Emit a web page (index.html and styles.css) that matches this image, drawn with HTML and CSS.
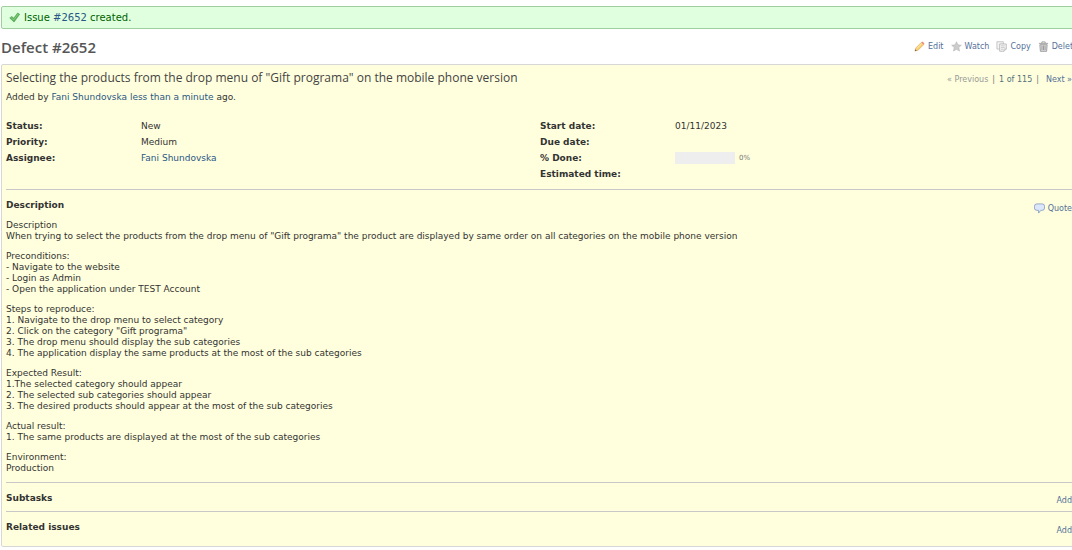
FILE: index.html
```html
<!DOCTYPE html>
<html lang="en">
<head>
<meta charset="utf-8">
<title>Defect #2652</title>
<link rel="stylesheet" href="styles.css">
</head>
<body>
<main class="content">
  <div class="flash">
    <svg class="icon" viewBox="0 0 12 12"><path d="M.8 6.500 3.200 4.800l1.800 2L9.500 1 11.600 2.500 5.500 11Z" fill="#5cb356" stroke="#3f9a46" stroke-width=".6"/><path d="M2.500 6.300 5 8.600 10 2.300" fill="none" stroke="#9bd891" stroke-width=".8"/></svg>
    <p>Issue <a href="#">#2652</a> created.</p>
  </div>
  <header class="heading">
    <h1>Defect #2652</h1>
    <nav class="actions">
      <a href="#"><svg class="icon" viewBox="0 0 12 12"><path d="M1 11 2 7.500 8 1.500 10.500 4 4.500 10Z" fill="#f8cf76" stroke="#d9a54c" stroke-width=".6"/><path d="M8 1.500 9.200.6 11.400 2.800 10.500 4Z" fill="#e98b78"/><path d="M1 11 1.500 9 3 10.500Z" fill="#665e58"/><path d="M3 8.200 8.700 2.600" stroke="#fff0bd" stroke-width=".8"/></svg>Edit</a>
      <a href="#"><svg class="icon" viewBox="0 0 12 12"><path d="m6 .8 1.500 3.400 3.800.4-2.800 2.500.8 3.900L6 9.100 2.700 11l.8-3.900L.7 4.600l3.800-.4Z" fill="#ccc" stroke="#b3b3b3" stroke-width=".6"/></svg>Watch</a>
      <a href="#"><svg class="icon" viewBox="0 0 12 12"><path d="M1 .8h7v8H1Z" fill="#f4f4f4" stroke="#b7b7b7" stroke-width=".8"/><path d="M4 3.200h7.200v5.500l-2.400 2.500H4Z" fill="#f5f5f5" stroke="#acacac" stroke-width=".8"/><path d="M5.500 5.300h4M5.500 7.200h4M5.500 9.100h2M8.800 11V8.700h2.300" fill="none" stroke="#bbb" stroke-width=".8"/></svg>Copy</a>
      <a href="#"><svg class="icon" viewBox="0 0 12 12"><path d="M2 4h8l-.6 7.300H2.600Z" fill="#ddd" stroke="#858585" stroke-width=".8"/><path d="M1 2.600h10M4.200 2.300V1h3.600v1.300M4.300 5v5M6 5v5M7.700 5v5" fill="none" stroke="#858585" stroke-width=".8"/></svg>Delete</a>
    </nav>
  </header>
  <article class="issue">
    <div class="title-row">
      <h2>Selecting the products from the drop menu of "Gift programa" on the mobile phone version</h2>
      <nav class="pager"><span class="muted">« Previous</span><span>|</span><span class="count">1 of 115</span><span>|</span><a href="#">Next »</a></nav>
    </div>
    <p class="author">Added by <a href="#">Fani Shundovska</a> <a href="#">less than a minute</a> ago.</p>
    <div class="attributes">
      <dl>
        <dt>Status:</dt><dd>New</dd>
        <dt>Priority:</dt><dd>Medium</dd>
        <dt>Assignee:</dt><dd><a href="#">Fani Shundovska</a></dd>
      </dl>
      <dl>
        <dt>Start date:</dt><dd>01/11/2023</dd>
        <dt>Due date:</dt><dd></dd>
        <dt>% Done:</dt><dd class="done"><span class="bar"></span><span class="percent">0%</span></dd>
        <dt>Estimated time:</dt><dd></dd>
      </dl>
    </div>
    <section class="description">
      <div class="section-head">
        <h3>Description</h3>
        <a class="tool" href="#"><svg class="icon" viewBox="0 0 12 12"><path d="M3 1h6q2.500 0 2.500 2.500v2Q11.500 8 9 8H7.500L5 11V8H3Q.5 8 .5 5.500v-2Q.5 1 3 1Z" fill="#dce8fa" stroke="#8398c4" stroke-width=".9"/></svg>Quote</a>
      </div>
      <div class="text">
        <p>Description<br>When trying to select the products from the drop menu of "Gift programa" the product are displayed by same order on all categories on the mobile phone version</p>
        <p>Preconditions:<br>- Navigate to the website<br>- Login as Admin<br>- Open the application under TEST Account</p>
        <p>Steps to reproduce:<br>1. Navigate to the drop menu to select category<br>2. Click on the category "Gift programa"<br>3. The drop menu should display the sub categories<br>4. The application display the same products at the most of the sub categories</p>
        <p>Expected Result:<br>1.The selected category should appear<br>2. The selected sub categories should appear<br>3. The desired products should appear at the most of the sub categories</p>
        <p>Actual result:<br>1. The same products are displayed at the most of the sub categories</p>
        <p>Environment:<br>Production</p>
      </div>
    </section>
    <section class="subtasks">
      <div class="section-head"><h3>Subtasks</h3><a class="tool" href="#">Add</a></div>
    </section>
    <section class="related">
      <div class="section-head"><h3>Related issues</h3><a class="tool" href="#">Add</a></div>
    </section>
  </article>
</main>
</body>
</html>
```
FILE: styles.css
```css
body {
  margin: 0;
  overflow: hidden;
  background: #fff;
  color: #333;
  font-family: "DejaVu Sans", Verdana, sans-serif;
  font-size: 9px;
}

h1, h2, h3, p, dl, dd { margin: 0; }

a {
  color: #2a5685;
  text-decoration: none;
}

.content {
  margin-right: -8px;
  padding: 6px 0 0 1px;
}

.icon {
  flex: none;
  width: 11px;
  height: 11px;
}

.flash {
  display: flex;
  align-items: center;
  gap: 4px;
  padding: 3px 7px;
  border: 1px solid #9fcf9f;
  border-radius: 2px;
  background: #dfffdf;
  color: #005f00;
  font-size: 10px;
  line-height: 15px;
}

.heading {
  display: flex;
  align-items: center;
  justify-content: space-between;
  height: 35px;
}

h1, h2 {
  color: #555;
  font-family: "Open Sans", "Trebuchet MS", sans-serif;
}

h1 {
  font-size: 15px;
  font-weight: 600;
  line-height: 20px;
}

.actions {
  display: flex;
  gap: 7px;
  padding-right: 2px;
  font-size: 8px;
}

.actions a, .tool {
  display: flex;
  align-items: center;
  gap: 3px;
  color: #55709a;
  white-space: nowrap;
}

.issue {
  padding: 4px 7px 5px 4px;
  border: 1px solid #d7d7d7;
  border-radius: 2px;
  background: #ffffdd;
}

.title-row {
  display: flex;
  justify-content: space-between;
  line-height: 18px;
}

h2 {
  color: #444;
  font-size: 12px;
  font-weight: 500;
}

.pager {
  display: flex;
  gap: 4px;
  padding-top: 1px;
  color: #777;
  font-size: 8px;
  line-height: 19px;
  white-space: nowrap;
}

.pager .muted { color: #999; }
.pager .count { color: #56707a; }
.pager a { padding-left: 3px; color: #55709a; }

.author { line-height: 16px; }

.attributes {
  display: grid;
  grid-template-columns: 1fr 1fr;
  column-gap: 2px;
  padding: 13px 0 7px;
}

.attributes dl {
  display: grid;
  grid-template-columns: 135px 1fr;
  grid-auto-rows: 16px;
  align-content: start;
  line-height: 16px;
}

dt, h3 {
  font-size: 9px;
  font-weight: bold;
}

.done {
  display: flex;
  align-items: center;
  gap: 4px;
}

.bar {
  width: 60px;
  height: 12px;
  background: #eee;
}

.percent {
  color: #777;
  font-size: 7px;
  line-height: 12px;
}

section { border-top: 1px solid #c8c8c8; }

.section-head {
  display: flex;
  justify-content: space-between;
  height: 28px;
}

h3 { line-height: 30px; }

.tool {
  padding-top: 7px;
  font-size: 8px;
}

.text {
  padding-bottom: 8px;
  line-height: 11px;
}

.text p + p { margin-top: 9px; }

.description .section-head { height: 30px; }
.related .section-head { height: 29px; }
```
